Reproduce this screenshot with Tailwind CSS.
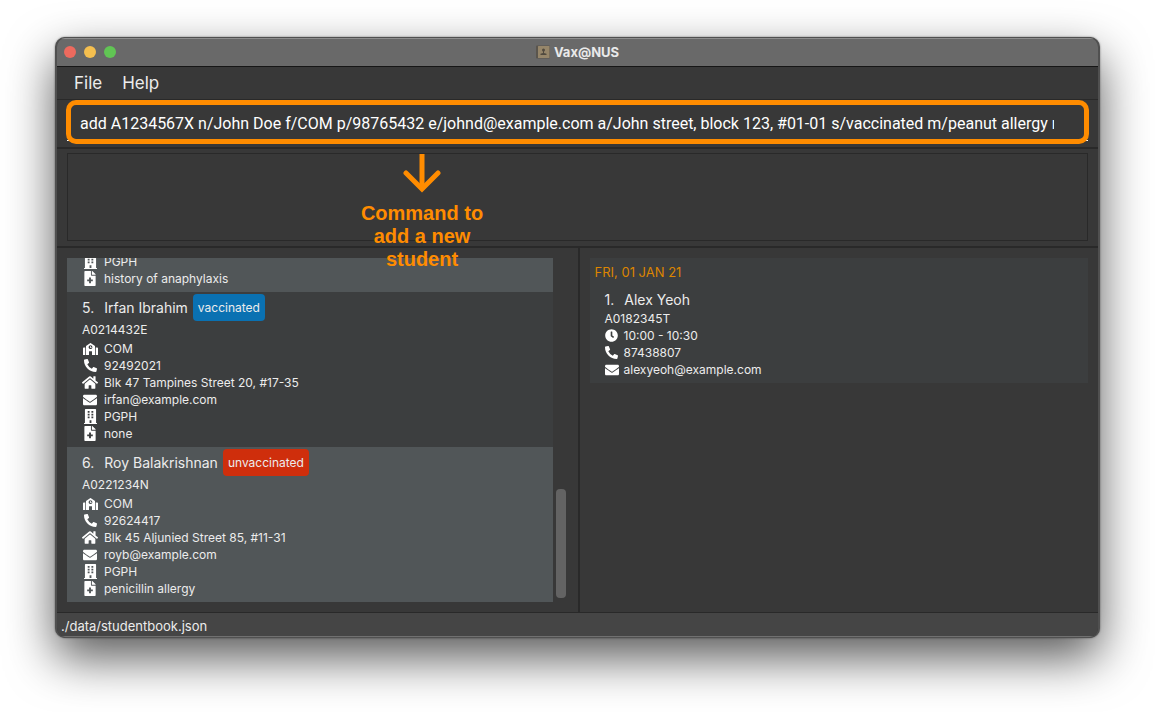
<!DOCTYPE html>
<html lang="en">
<head>
<meta charset="utf-8">
<meta name="viewport" content="width=device-width, initial-scale=1">
<title>Vax@NUS</title>
<script src="https://cdn.jsdelivr.net/npm/@tailwindcss/browser@4"></script>
</head>
<body class="flex h-screen flex-col overflow-hidden bg-white px-[55px] pt-[37px] pb-[74px] font-['Inter',sans-serif] text-[#ececec]">

<svg class="hidden" aria-hidden="true">
  <symbol id="school" viewBox="0 0 640 512"><path fill="currentColor" d="M0 224v272c0 8.84 7.16 16 16 16h80V192H32c-17.67 0-32 14.33-32 32zm360-48h-24v-40c0-4.42-3.58-8-8-8h-16c-4.42 0-8 3.58-8 8v64c0 4.42 3.58 8 8 8h48c4.42 0 8-3.58 8-8v-16c0-4.42-3.58-8-8-8zm137.75-63.96l-160-106.67a32.02 32.02 0 0 0-35.5 0l-160 106.67A32.002 32.002 0 0 0 128 138.66V512h128V368c0-8.84 7.16-16 16-16h96c8.84 0 16 7.16 16 16v144h128V138.67c0-10.7-5.35-20.69-14.25-26.63zM320 256c-44.18 0-80-35.82-80-80s35.82-80 80-80 80 35.82 80 80-35.82 80-80 80zm288-64h-64v320h80c8.84 0 16-7.16 16-16V224c0-17.67-14.33-32-32-32z"/></symbol>
  <symbol id="phone" viewBox="0 0 512 512"><path fill="currentColor" d="M497.39 361.8l-112-48a24 24 0 0 0-28 6.9l-49.6 60.6A370.66 370.66 0 0 1 130.6 204.11l60.6-49.6a23.94 23.94 0 0 0 6.9-28l-48-112A24.16 24.16 0 0 0 122.6.61l-104 24A24 24 0 0 0 0 48c0 256.5 207.9 464 464 464a24 24 0 0 0 23.4-18.6l24-104a24.29 24.29 0 0 0-14.01-27.6z"/></symbol>
  <symbol id="home" viewBox="0 0 576 512"><path fill="currentColor" d="M280.37 148.26L96 300.11V464a16 16 0 0 0 16 16l112.06-.29a16 16 0 0 0 15.92-16V368a16 16 0 0 1 16-16h64a16 16 0 0 1 16 16v95.64a16 16 0 0 0 16 16.05L464 480a16 16 0 0 0 16-16V300L295.67 148.26a12.19 12.19 0 0 0-15.3 0zM571.6 251.47L488 182.56V44.05a12 12 0 0 0-12-12h-56a12 12 0 0 0-12 12v72.61L318.47 43a48 48 0 0 0-61 0L4.34 251.47a12 12 0 0 0-1.6 16.9l25.5 31A12 12 0 0 0 45.15 301l235.22-193.74a12.19 12.19 0 0 1 15.3 0L530.9 301a12 12 0 0 0 16.9-1.6l25.5-31a12 12 0 0 0-1.7-16.93z"/></symbol>
  <symbol id="mail" viewBox="0 0 512 512"><path fill="currentColor" d="M502.3 190.8c3.9-3.1 9.7-.2 9.7 4.7V400c0 26.5-21.5 48-48 48H48c-26.5 0-48-21.5-48-48V195.6c0-5 5.7-7.8 9.7-4.7 22.4 17.4 52.1 39.5 154.1 113.6 21.1 15.4 56.7 47.8 92.2 47.6 35.7.3 72-32.8 92.3-47.6 102-74.1 131.6-96.3 154-113.7zM256 320c23.2.4 56.6-29.2 73.4-41.4 132.7-96.3 142.8-104.7 173.4-128.7 5.8-4.5 9.2-11.5 9.2-18.9v-19c0-26.5-21.5-48-48-48H48c-26.5 0-48 21.5-48 48v19c0 7.4 3.4 14.3 9.2 18.9 30.6 23.9 40.7 32.4 173.4 128.7 16.8 12.2 50.2 41.8 73.4 41.4z"/></symbol>
  <symbol id="building" viewBox="0 0 448 512"><path fill="currentColor" fill-rule="evenodd" d="M436 480h-20V24c0-13.3-10.7-24-24-24H56C42.7 0 32 10.7 32 24v456H12c-6.6 0-12 5.4-12 12v20h448v-20c0-6.600-5.400-12-12-12zM128 64h64v64h-64zM256 64h64v64h-64zM128 160h64v64h-64zM256 160h64v64h-64zM128 256h64v64h-64zM256 256h64v64h-64zM192 384h64v96h-64z"/></symbol>
  <symbol id="medical" viewBox="0 0 384 512"><path fill="currentColor" d="M377 105L279.1 7c-4.5-4.5-10.6-7-17-7H256v128h128v-6.1c0-6.3-2.5-12.4-7-16.9zm-153 31V0H24C10.7 0 0 10.7 0 24v464c0 13.3 10.7 24 24 24h336c13.3 0 24-10.7 24-24V160H248c-13.2 0-24-10.8-24-24zm64 160v48c0 4.4-3.6 8-8 8h-56v56c0 4.4-3.6 8-8 8h-48c-4.4 0-8-3.6-8-8v-56h-56c-4.4 0-8-3.6-8-8v-48c0-4.4 3.6-8 8-8h56v-56c0-4.4 3.6-8 8-8h48c4.4 0 8 3.6 8 8v56h56c4.4 0 8 3.6 8 8z"/></symbol>
  <symbol id="clock" viewBox="0 0 512 512"><path fill="currentColor" d="M256,8C119,8,8,119,8,256S119,504,256,504,504,393,504,256,393,8,256,8Zm92.49,313h0l-20,25a16,16,0,0,1-22.49,2.5h0l-67-49.72a40,40,0,0,1-15-31.23V112a16,16,0,0,1,16-16h32a16,16,0,0,1,16,16V256l58,42.5A16,16,0,0,1,348.49,321Z"/></symbol>
</svg>

<div class="flex min-h-0 flex-1 flex-col overflow-hidden rounded-[10px] border border-x-2 border-[#505050] bg-[#383838] shadow-[0_0_2px_rgba(0,0,0,0.5),0_20px_48px_rgba(0,0,0,0.65)]">

  <header class="flex h-[29px] shrink-0 items-center border-t border-b border-t-[#8e8e8e] border-b-[#161616] bg-[#696969] px-[7px] pb-[2px]">
    <div class="flex flex-1 gap-2">
      <button aria-label="Close" class="size-3 rounded-full bg-[#ed6a5e]"></button>
      <button aria-label="Minimize" class="size-3 rounded-full bg-[#f5bf4f]"></button>
      <button aria-label="Zoom" class="size-3 rounded-full bg-[#61c554]"></button>
    </div>
    <div class="flex items-center gap-1">
      <svg class="size-[14px]" viewBox="0 0 14 14" aria-hidden="true"><rect width="14" height="13" y=".5" rx="1" fill="#5a554d"/><rect x="2" y="1" width="11.5" height="12" rx=".5" fill="#96866a"/><circle cx="7.5" cy="5" r="1.5" fill="#514a3f"/><path d="M7 6h1v2l2.500.8v1.200h-6V8.800L7 8z" fill="#514a3f"/></svg>
      <h1 class="text-[13px] leading-4 font-bold text-[#e9e9e9]">Vax@NUS</h1>
    </div>
    <div class="flex-1"></div>
  </header>

  <nav class="flex h-8 shrink-0 items-center gap-5 px-[17px] pt-[2px] text-[17px]">
    <button>File</button>
    <button>Help</button>
  </nav>

  <section class="relative h-[50px] shrink-0 border-t border-b-2 border-[#292929] px-[10px]">
    <label class="sr-only" for="command">Command</label>
    <input id="command" type="text" class="block h-[41px] w-full border-b border-white bg-transparent pt-[6px] pr-[34px] pl-[13px] font-['Roboto',sans-serif] text-[16px] text-white outline-none" value="add A1234567X n/John Doe f/COM p/98765432 e/johnd@example.com a/John street, block 123, #01-01 s/vaccinated m/peanut allergy r/RVRC">
    <div class="pointer-events-none absolute inset-x-[9px] top-0 h-11 rounded-[10px] border-[5px] border-[#ff8c00]"></div>
    <div class="pointer-events-none absolute top-[54px] left-[300px] z-10 flex w-[130px] flex-col items-center gap-2 text-[#ff8c00]">
      <svg class="h-[40px] w-[38px]" viewBox="0 0 38 40" fill="none" stroke="currentColor" stroke-width="5" aria-hidden="true"><path d="M19 0v35"/><path d="M3 19l16 16 16-16" stroke-linecap="round" stroke-linejoin="miter"/></svg>
      <p class="text-center font-['Liberation_Sans',sans-serif] text-[20px] leading-[23px] font-bold">Command to<br>add a new<br>student</p>
    </div>
  </section>

  <section class="h-[99px] shrink-0 border-b-2 border-[#292929] px-[10px] pt-1 pb-[5px]">
    <div class="h-full border border-[#292929]"></div>
  </section>

  <main class="flex min-h-0 flex-1">
    <section class="flex min-w-0 flex-1 gap-[3px] py-[10px] pr-3 pl-[10px]">
      <ul class="flex min-w-0 flex-1 flex-col justify-end overflow-hidden text-[12px] leading-[17px]">
        <li class="shrink-0 bg-[#515658] px-[15px] pb-[5px]">
          <dl>
            <div class="flex items-center gap-[6px]"><dt class="flex w-4 justify-center"><svg class="h-[15px] w-[13px] text-white" role="img" aria-label="Residence"><use href="#building"/></svg></dt><dd>PGPH</dd></div>
            <div class="flex items-center gap-[6px]"><dt class="flex w-4 justify-center"><svg class="h-[15px] w-[12px] text-white" role="img" aria-label="Medical details"><use href="#medical"/></svg></dt><dd>history of anaphylaxis</dd></div>
          </dl>
        </li>
        <li class="shrink-0 bg-[#3c3e3f] px-[15px] pt-[2px] pb-[5px]">
          <div class="flex items-center gap-[5px] text-[14px]"><h2 class="flex gap-[10px]"><span>5.</span><span>Irfan Ibrahim</span></h2><span class="rounded bg-[#0a71b2] px-[5px] py-[5px] text-[12px]">vaccinated</span></div>
          <p class="mb-[2px]">A0214432E</p>
          <dl>
            <div class="flex items-center gap-[6px]"><dt class="flex w-4 justify-center"><svg class="h-[12px] w-[15px] text-white" role="img" aria-label="Faculty"><use href="#school"/></svg></dt><dd>COM</dd></div>
            <div class="flex items-center gap-[6px]"><dt class="flex w-4 justify-center"><svg class="size-[13px] text-white" role="img" aria-label="Phone"><use href="#phone"/></svg></dt><dd>92492021</dd></div>
            <div class="flex items-center gap-[6px]"><dt class="flex w-4 justify-center"><svg class="h-[15px] w-[16px] text-white" role="img" aria-label="Address"><use href="#home"/></svg></dt><dd>Blk 47 Tampines Street 20, #17-35</dd></div>
            <div class="flex items-center gap-[6px]"><dt class="flex w-4 justify-center"><svg class="size-[14px] text-white" role="img" aria-label="Email"><use href="#mail"/></svg></dt><dd>irfan@example.com</dd></div>
            <div class="flex items-center gap-[6px]"><dt class="flex w-4 justify-center"><svg class="h-[15px] w-[13px] text-white" role="img" aria-label="Residence"><use href="#building"/></svg></dt><dd>PGPH</dd></div>
            <div class="flex items-center gap-[6px]"><dt class="flex w-4 justify-center"><svg class="h-[15px] w-[12px] text-white" role="img" aria-label="Medical details"><use href="#medical"/></svg></dt><dd>none</dd></div>
          </dl>
        </li>
        <li class="shrink-0 bg-[#515658] px-[15px] pt-[2px] pb-[5px]">
          <div class="flex items-center gap-[5px] text-[14px]"><h2 class="flex gap-[10px]"><span>6.</span><span>Roy Balakrishnan</span></h2><span class="rounded bg-[#cf2e0c] px-[5px] py-[5px] text-[12px]">unvaccinated</span></div>
          <p class="mb-[2px]">A0221234N</p>
          <dl>
            <div class="flex items-center gap-[6px]"><dt class="flex w-4 justify-center"><svg class="h-[12px] w-[15px] text-white" role="img" aria-label="Faculty"><use href="#school"/></svg></dt><dd>COM</dd></div>
            <div class="flex items-center gap-[6px]"><dt class="flex w-4 justify-center"><svg class="size-[13px] text-white" role="img" aria-label="Phone"><use href="#phone"/></svg></dt><dd>92624417</dd></div>
            <div class="flex items-center gap-[6px]"><dt class="flex w-4 justify-center"><svg class="h-[15px] w-[16px] text-white" role="img" aria-label="Address"><use href="#home"/></svg></dt><dd>Blk 45 Aljunied Street 85, #11-31</dd></div>
            <div class="flex items-center gap-[6px]"><dt class="flex w-4 justify-center"><svg class="size-[14px] text-white" role="img" aria-label="Email"><use href="#mail"/></svg></dt><dd>royb@example.com</dd></div>
            <div class="flex items-center gap-[6px]"><dt class="flex w-4 justify-center"><svg class="h-[15px] w-[13px] text-white" role="img" aria-label="Residence"><use href="#building"/></svg></dt><dd>PGPH</dd></div>
            <div class="flex items-center gap-[6px]"><dt class="flex w-4 justify-center"><svg class="h-[15px] w-[12px] text-white" role="img" aria-label="Medical details"><use href="#medical"/></svg></dt><dd>penicillin allergy</dd></div>
          </dl>
        </li>
      </ul>
      <div class="flex w-[10px] flex-col justify-end pb-[4px]"><div class="h-[109px] rounded bg-[#636363]"></div></div>
    </section>

    <section class="min-w-0 flex-1 border-l-2 border-[#292929] p-[10px]">
      <div class="bg-[#3c3e3f] px-[5px] pt-[5px] pb-[5px] text-[12px] leading-[17px]">
        <h2 class="text-[13px] leading-[18px] text-[#dd8500]">FRI, 01 JAN 21</h2>
        <article class="px-[10px] pt-[9px]">
          <h3 class="flex gap-[10px] text-[14px] leading-5"><span>1.</span><span>Alex Yeoh</span></h3>
          <p>A0182345T</p>
          <dl>
            <div class="flex items-center gap-[5px]"><dt class="flex w-[14px] justify-center"><svg class="size-[13px] text-white" role="img" aria-label="Time"><use href="#clock"/></svg></dt><dd>10:00 - 10:30</dd></div>
            <div class="flex items-center gap-[5px]"><dt class="flex w-[14px] justify-center"><svg class="size-[13px] text-white" role="img" aria-label="Phone"><use href="#phone"/></svg></dt><dd>87438807</dd></div>
            <div class="flex items-center gap-[5px]"><dt class="flex w-[14px] justify-center"><svg class="size-[14px] text-white" role="img" aria-label="Email"><use href="#mail"/></svg></dt><dd>alexyeoh@example.com</dd></div>
          </dl>
        </article>
      </div>
    </section>
  </main>

  <footer class="flex h-[25px] shrink-0 items-center border-t border-b border-t-[#292929] border-b-[#707070] bg-[#454545] px-1 pt-[2px] text-[13px] leading-5">./data/studentbook.json</footer>
</div>
</body>
</html>
